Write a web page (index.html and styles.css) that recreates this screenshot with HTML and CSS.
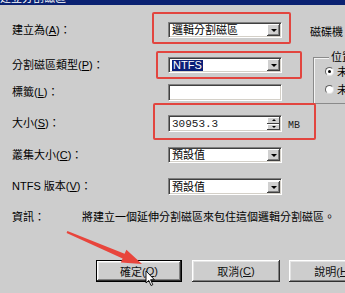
FILE: index.html
```html
<!DOCTYPE html>
<html>
<head>
<meta charset="utf-8">
<link rel="stylesheet" href="styles.css">
</head>
<body>
<div class="title"><span>建立分割磁區</span></div>
<div class="main">
  <div class="form">
    <div class="row r1">
      <span class="label">建立為(<u>A</u>)：</span>
      <div class="field"><span class="val">邏輯分割磁區</span><span class="drop"></span></div>
    </div>
    <div class="row r2">
      <span class="label">分割磁區類型(<u>P</u>)：</span>
      <div class="field"><span class="val"><span class="sel">NTFS</span></span><span class="drop"></span></div>
    </div>
    <div class="row r3">
      <span class="label">標籤(<u>L</u>)：</span>
      <div class="field tall"><span class="val"></span></div>
    </div>
    <div class="row r4">
      <span class="label">大小(<u>S</u>)：</span>
      <div class="field tall"><span class="val mono">30953.3</span><span class="spin"><span class="up"></span><span class="down"></span></span></div>
      <span class="unit">MB</span>
    </div>
    <div class="row r5">
      <span class="label">叢集大小(<u>C</u>)：</span>
      <div class="field"><span class="val">預設值</span><span class="drop"></span></div>
    </div>
    <div class="row r6">
      <span class="label">NTFS 版本(<u>V</u>)：</span>
      <div class="field tall"><span class="val">預設值</span><span class="drop"></span></div>
    </div>
  </div>
  <div class="side">
    <div class="drive">磁碟機</div>
    <div class="group">
      <span class="legend">位置</span>
      <div class="radio first"><span class="dot checked"></span><span>未</span></div>
      <div class="radio second"><span class="dot"></span><span>未</span></div>
    </div>
  </div>
</div>
<div class="info">
  <span class="info-label">資訊：</span>
  <span class="info-text">將建立一個延伸分割磁區來包住這個邏輯分割磁區。</span>
</div>
<div class="buttons">
  <div class="btn default">確定(<u>O</u>)</div>
  <div class="btn cancel">取消(<u>C</u>)</div>
  <div class="btn help">說明(<u>H</u>)</div>
</div>

<div class="mark mark1"></div>
<div class="mark mark2"></div>
<div class="mark mark3"></div>
<svg class="overlay" width="345" height="293" viewBox="0 0 345 293">
  <polygon fill="#e8453c" points="67.4,231.1 124.6,253.8 126.4,249.7 142,264 120.8,262.5 122.6,258.4 66.6,232.9"/>
  <path d="M146 271 L146 283 L148.8 280.4 L151 285.5 L152.8 284.7 L150.6 279.7 L154.4 279.7 Z" fill="#fff" stroke="#000" stroke-width="0.9" stroke-linejoin="round"/>
</svg>
</body>
</html>
```

FILE: styles.css
```css
html, body {
  margin: 0;
  padding: 0;
}
body {
  width: 345px;
  height: 293px;
  overflow: hidden;
  position: relative;
  background: #cdcdcd;
  color: #000;
  font-family: "Liberation Sans", "Noto Sans CJK TC", sans-serif;
  font-size: 11px;
}
u {
  text-decoration: underline;
  text-underline-offset: 1px;
}
.title {
  height: 5px;
  background: #0b2272;
  overflow: hidden;
}
.title span {
  display: block;
  color: #fff;
  font-size: 11px;
  line-height: 12px;
  margin-top: -8px;
  white-space: nowrap;
}
.main {
  display: flex;
  padding-top: 17px;
}
.form {
  width: 298px;
  padding-left: 12px;
  flex-shrink: 0;
}
.row {
  display: flex;
  align-items: flex-start;
}
.r1 { height: 35px; }
.r2 { height: 27px; }
.r3 { height: 31px; }
.r4 { height: 32px; }
.r5 { height: 31px; }
.r6 { height: 17px; }
.label {
  width: 156px;
  flex-shrink: 0;
  line-height: 16px;
  height: 16px;
  white-space: nowrap;
}
.field {
  width: 114px;
  height: 16px;
  box-sizing: border-box;
  background: #fff;
  border: 1px solid;
  border-color: #808080 #ffffff #ffffff #808080;
  box-shadow: inset 1px 1px #404040, inset -1px -1px #d4d0c8;
  display: flex;
  align-items: center;
  flex-shrink: 0;
}
.field.tall {
  height: 17px;
}
.val {
  flex: 1;
  padding-left: 3px;
  white-space: nowrap;
  line-height: 12px;
}
.mono {
  font-family: "Liberation Mono", monospace;
  font-size: 11px;
  color: #222;
}
.sel {
  background: #0a1f78;
  color: #fff;
  padding: 0 1px;
  display: inline-block;
  line-height: 11px;
}
.drop {
  width: 13px;
  height: 12px;
  margin-right: 1px;
  background: #d0d0d0;
  box-shadow: inset -1px -1px #404040, inset 1px 1px #ffffff, inset -2px -2px #808080;
  display: flex;
  align-items: center;
  justify-content: center;
  flex-shrink: 0;
}
.drop::after {
  content: "";
  border-left: 3px solid transparent;
  border-right: 3px solid transparent;
  border-top: 3px solid #000;
  margin-top: 1px;
}
.spin {
  width: 13px;
  height: 13px;
  margin-right: 1px;
  display: flex;
  flex-direction: column;
  flex-shrink: 0;
}
.spin span {
  flex: 1;
  background: #d0d0d0;
  box-shadow: inset -1px -1px #404040, inset 1px 1px #ffffff;
  display: flex;
  align-items: center;
  justify-content: center;
}
.spin .up::after {
  content: "";
  border-left: 2px solid transparent;
  border-right: 2px solid transparent;
  border-bottom: 2px solid #000;
}
.spin .down::after {
  content: "";
  border-left: 2px solid transparent;
  border-right: 2px solid transparent;
  border-top: 2px solid #000;
}
.unit {
  margin-left: 6px;
  font-family: "Liberation Mono", monospace;
  font-size: 10px;
  line-height: 17px;
  margin-top: 2px;
  color: #222;
}
.side {
  flex: 1;
  overflow: hidden;
}
.drive {
  margin-top: 3px;
  line-height: 14px;
  white-space: nowrap;
}
.group {
  margin-top: 18px;
  margin-left: 3px;
  width: 60px;
  height: 45px;
  border: 1px solid #8a8a8a;
  box-shadow: inset 1px 1px #f4f4f4;
}
.legend {
  display: table;
  margin-top: -7px;
  margin-left: 15px;
  padding: 0 2px;
  background: #cdcdcd;
  line-height: 12px;
  white-space: nowrap;
}
.radio {
  display: flex;
  align-items: center;
  margin-left: 11px;
  height: 10px;
  white-space: nowrap;
}
.radio.first { margin-top: 3px; }
.radio.second { margin-top: 8px; }
.dot {
  width: 9px;
  height: 9px;
  box-sizing: border-box;
  border-radius: 50%;
  background: #fff;
  border: 1px solid;
  border-color: #606060 #e0e0e0 #e0e0e0 #606060;
  margin-right: 3px;
  display: flex;
  align-items: center;
  justify-content: center;
  flex-shrink: 0;
}
.dot.checked::after {
  content: "";
  width: 3px;
  height: 3px;
  border-radius: 50%;
  background: #000;
}
.info {
  display: flex;
  margin-top: 16px;
  padding-left: 12px;
  line-height: 12px;
  white-space: nowrap;
}
.info-label {
  width: 70px;
  flex-shrink: 0;
}
.buttons {
  display: flex;
  margin-top: 37px;
  padding-left: 96px;
}
.btn {
  height: 22px;
  box-sizing: border-box;
  flex-shrink: 0;
  display: flex;
  align-items: center;
  justify-content: center;
  background: #cdcdcd;
  box-shadow: inset -1px -1px #303030, inset 1px 1px #ffffff, inset -2px -2px #808080, inset 2px 2px #e4e4e4;
  white-space: nowrap;
  color: #111;
}
.btn.default {
  width: 86px;
  border: 1px solid #000;
}
.btn.cancel {
  width: 88px;
  margin-left: 10px;
}
.btn.help {
  width: 88px;
  margin-left: 9px;
}
.mark {
  position: absolute;
  border: 2px solid #e2453f;
  border-radius: 2px;
  box-sizing: border-box;
}
.mark1 { left: 152px; top: 12px; width: 139px; height: 32px; }
.mark2 { left: 156px; top: 51px; width: 146px; height: 28px; }
.mark3 { left: 153px; top: 103px; width: 163px; height: 37px; }
.overlay {
  position: absolute;
  left: 0;
  top: 0;
}
```
